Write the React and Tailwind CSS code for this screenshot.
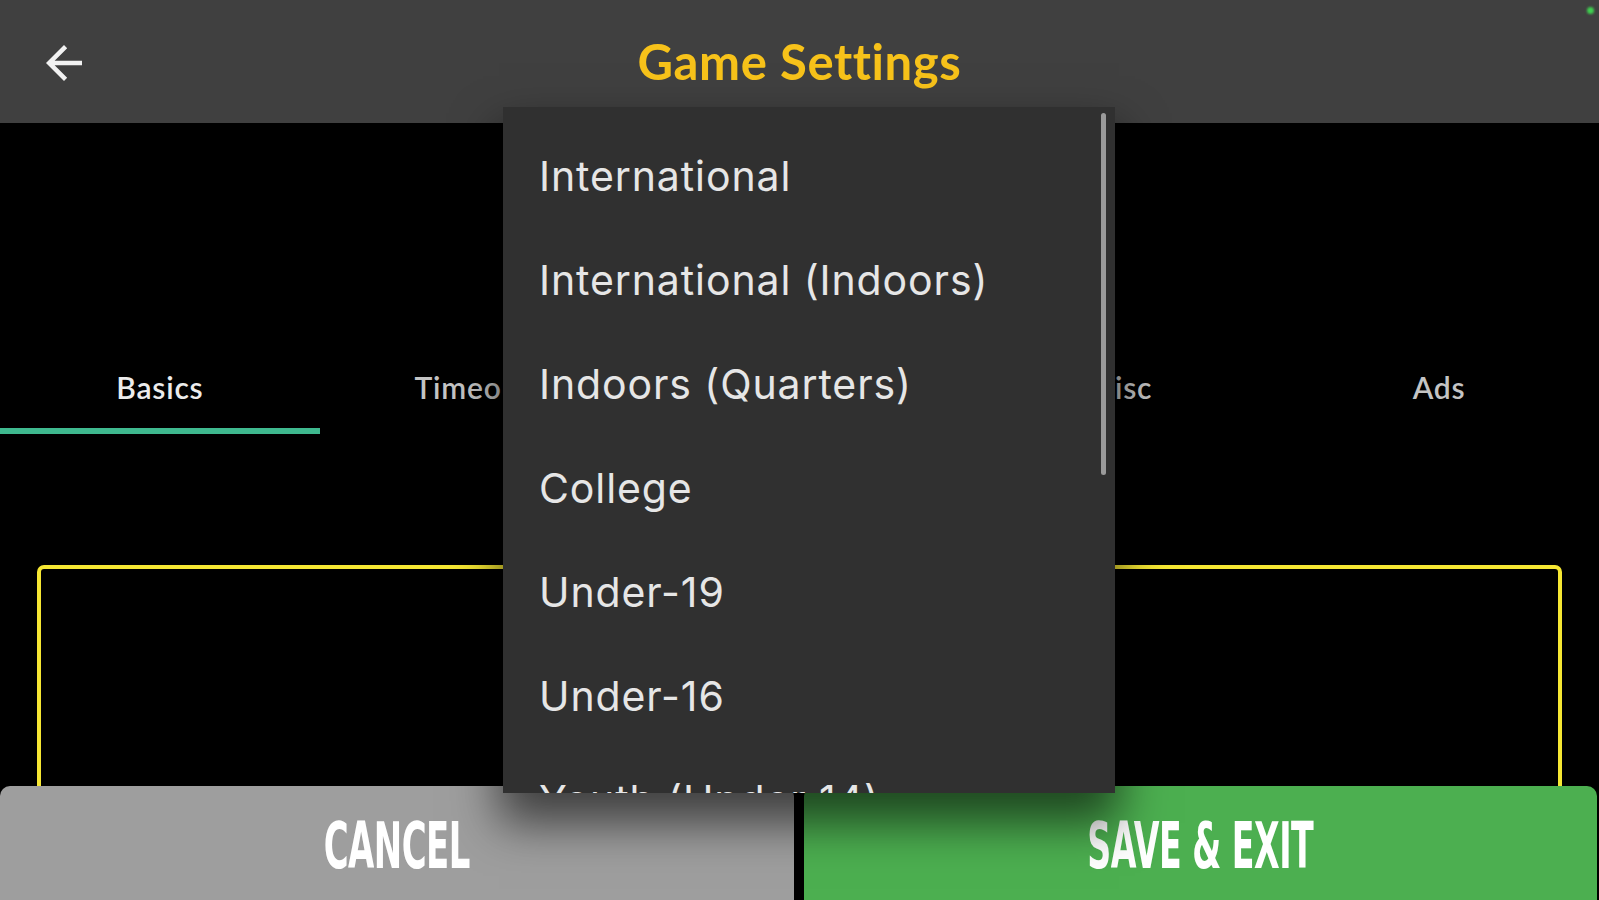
const tabs = ["Basics", "Timeouts", "Rules", "Misc", "Ads"];

const divisions = [
  "International",
  "International (Indoors)",
  "Indoors (Quarters)",
  "College",
  "Under-19",
  "Under-16",
  "Youth (Under 14)",
];

const BackArrow = () => (
  <svg viewBox="0 0 24 24" className="w-[54px] h-[54px] fill-[#f2f2f2]">
    <path d="M20 11H7.83l5.59-5.59L12 4l-8 8 8 8 1.41-1.41L7.83 13H20v-2z" />
  </svg>
);

const App = () => {
  return (
    <div className="relative w-[1599px] h-[900px] overflow-hidden bg-black flex flex-col font-['Lato',sans-serif]">
      {/* header */}
      <div className="relative h-[123px] shrink-0 bg-[#404040] flex items-center justify-center">
        <div className="absolute left-[37px] top-[36px]">
          <BackArrow />
        </div>
        <h1 className="text-[49px] font-bold text-[#f7c21a] tracking-[0.6px] leading-none">
          Game Settings
        </h1>
        <span className="absolute top-[7px] left-[1587px] w-[7px] h-[7px] rounded-full bg-[#3fcf4f] blur-[1px]" />
      </div>

      {/* content */}
      <div className="flex-1 overflow-hidden pt-[223px]">
        <div className="flex">
          {tabs.map((t, i) => (
            <div key={t} className="w-[320px] flex flex-col">
              <div
                className={
                  i === 0
                    ? "h-[82px] flex items-center justify-center text-[30px] font-semibold tracking-[0.8px] text-[#ececec]"
                    : "h-[82px] flex items-center justify-center text-[30px] font-semibold tracking-[0.8px] text-[#c4c4c4]"
                }
              >
                {t}
              </div>
              <div className={i === 0 ? "h-[6px] bg-[#3fb98f]" : "h-[6px]"} />
            </div>
          ))}
        </div>
        <div className="mt-[131px] ml-[37px] w-[1525px] h-[400px] border-4 border-[#f6e733] rounded-[7px]" />
      </div>

      {/* footer buttons */}
      <div className="h-[114px] shrink-0 flex gap-[10px] pr-[2px]">
        <button className="flex-1 rounded-t-[10px] bg-[#9e9e9e] flex items-center justify-center pt-[5px]">
          <span className="inline-block scale-x-[0.53] text-[64px] font-bold text-white font-['DejaVu_Sans',sans-serif] tracking-[-1px] leading-none">
            CANCEL
          </span>
        </button>
        <button className="flex-1 rounded-t-[10px] bg-[#4caf50] flex items-center justify-center pt-[5px]">
          <span className="inline-block scale-x-[0.52] text-[64px] font-bold text-white font-['DejaVu_Sans',sans-serif] tracking-[-1px] leading-none whitespace-nowrap">
            SAVE &amp; EXIT
          </span>
        </button>
      </div>

      {/* open division menu */}
      <div className="absolute left-[503px] top-[107px] w-[612px] h-[686px] bg-[#303030] overflow-hidden shadow-[0_26px_44px_4px_rgba(0,0,0,0.6)]">
        <div className="pt-[18px]">
          {divisions.map((d) => (
            <div
              key={d}
              className="h-[104px] flex items-center pl-[36px] text-[41px] tracking-[0.9px] text-[#e6e6e6] font-['Inter',sans-serif]"
            >
              {d}
            </div>
          ))}
        </div>
        <div className="absolute right-[9px] top-[6px] w-[5px] h-[362px] rounded-full bg-[#9a9a9a]" />
      </div>
    </div>
  );
};

export default App;
